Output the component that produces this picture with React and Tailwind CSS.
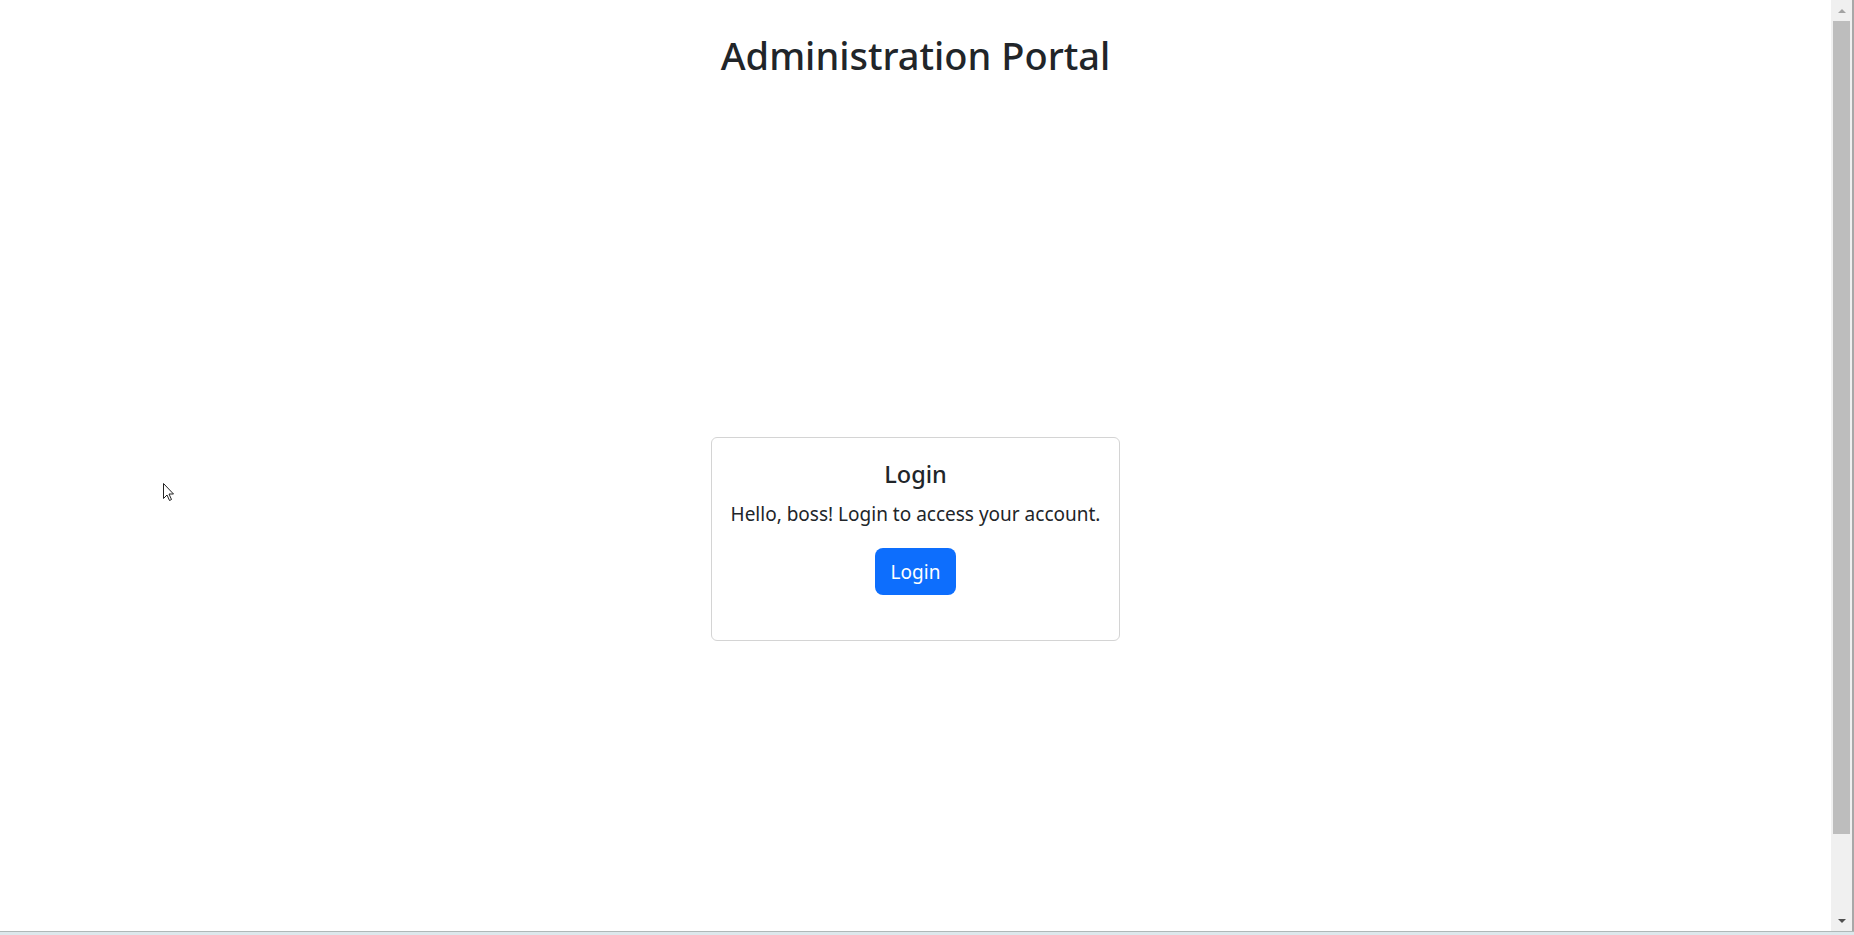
export default function App() {
  return (
    <div
      className="relative flex h-[935px] w-full flex-col overflow-hidden bg-white text-[#212529]"
      style={{ fontFamily: '"Noto Sans", "Open Sans", sans-serif' }}
    >
      <div className="flex min-h-0 flex-1">
        <main className="flex flex-1 flex-col items-center">
          <h1 className="mt-[31px] text-[38px] leading-[48px] font-medium">
            Administration Portal
          </h1>

          <div className="mt-[358px] w-[409px] rounded-md border border-[#d4d4d4] bg-white px-4 pt-[21px] pb-[45px] text-center">
            <h4 className="text-[23.5px] leading-[30px] font-medium">Login</h4>
            <p className="mt-[10px] whitespace-nowrap text-[19px] leading-[30px]">
              Hello, boss! Login to access your account.
            </p>
            <button
              type="button"
              className="mt-[19px] inline-flex h-[47px] items-center rounded-lg bg-[#0d6efd] px-4 pt-px text-[19px] text-white"
            >
              Login
            </button>
          </div>
        </main>

        {/* fake classic scrollbar */}
        <div className="flex w-[23px] border-r-2 border-[#a8a8a8] bg-[#f0f0f0]">
          <div className="flex flex-1 flex-col items-center">
            <div className="flex h-[21px] items-center justify-center">
              <div className="h-0 w-0 border-x-[4px] border-b-[4px] border-x-transparent border-b-[#a3a3a3]" />
            </div>
            <div className="h-[813px] w-[17px] bg-[#bdbdbd]" />
            <div className="flex-1" />
            <div className="flex h-[21px] items-center justify-center">
              <div className="h-0 w-0 border-x-[4px] border-t-[4px] border-x-transparent border-t-[#505050]" />
            </div>
          </div>
        </div>
      </div>
      <div className="h-px bg-[#b0b8b8]" />
      <div className="h-[3px] bg-[#dde8ec]" />

      {/* mouse pointer */}
      <svg
        className="absolute left-[163px] top-[483px]"
        width="12"
        height="19"
        viewBox="0 0 12 19"
      >
        <path
          d="M0.5 0.5 L0.5 15.5 L4 12 L6.5 17.5 L8.5 16.5 L6 11 L10.5 11 Z"
          fill="white"
          stroke="#222"
          strokeWidth="1"
          strokeLinejoin="miter"
        />
      </svg>
    </div>
  );
}
